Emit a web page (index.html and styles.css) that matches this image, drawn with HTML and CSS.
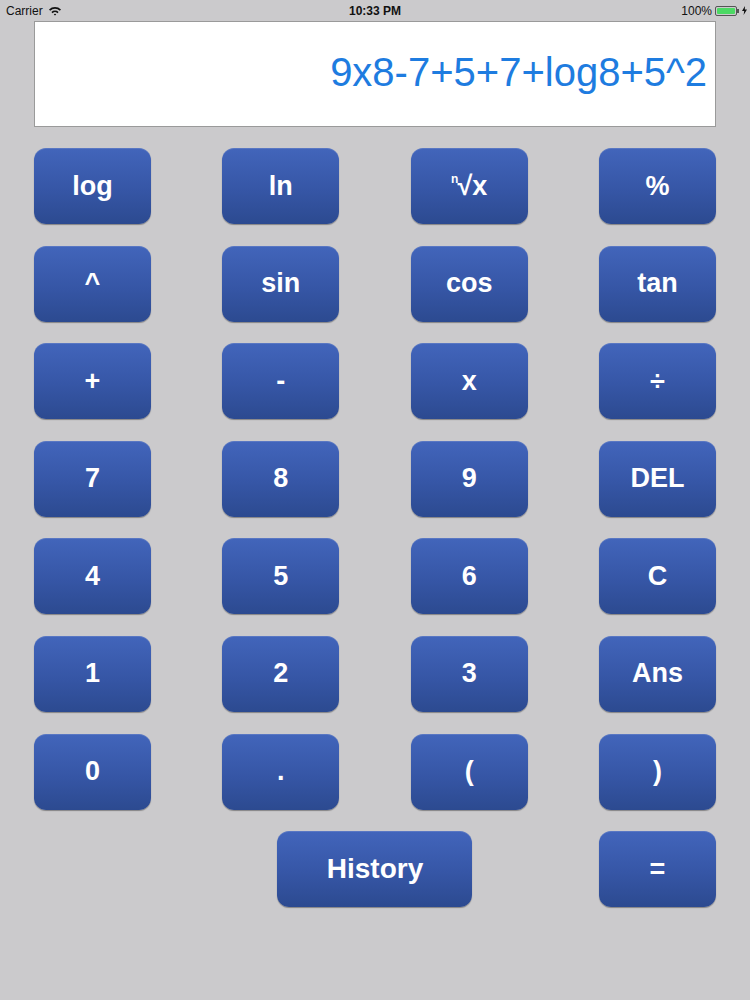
FILE: index.html
```html
<!DOCTYPE html>
<html>
<head>
<meta charset="utf-8">
<link rel="stylesheet" href="styles.css">
</head>
<body>
<div class="status">
  <div class="st-left">Carrier
    <svg class="wifi" width="14" height="10" viewBox="0 0 14 10"><path d="M1 3.6 A8.5 8.5 0 0 1 13 3.6 L11.8 4.8 A6.8 6.8 0 0 0 2.2 4.8 Z" fill="#111"/><path d="M3.4 6 A5.1 5.1 0 0 1 10.6 6 L9.4 7.2 A3.4 3.4 0 0 0 4.6 7.2 Z" fill="#111"/><path d="M5.8 8.4 A1.7 1.7 0 0 1 8.2 8.4 L7 9.6 Z" fill="#111"/></svg>
  </div>
  <div class="st-mid">10:33 PM</div>
  <div class="st-right">100%
    <span class="batt"><span class="batt-fill"></span></span><span class="batt-tip"></span>
    <svg class="bolt" width="5" height="9" viewBox="0 0 5 9"><path d="M3 0 L0 5 L2.2 5 L1.6 9 L5 3.6 L2.8 3.6 Z" fill="#111"/></svg>
  </div>
</div>
<div class="display"><span class="expr">9x8-7+5+7+log8+5^2</span></div>
<div class="pad">
  <button class="key">log</button>
  <button class="key">ln</button>
  <button class="key"><sup class="root-n">n</sup>√x</button>
  <button class="key">%</button>
  <button class="key">^</button>
  <button class="key">sin</button>
  <button class="key">cos</button>
  <button class="key">tan</button>
  <button class="key">+</button>
  <button class="key">-</button>
  <button class="key">x</button>
  <button class="key">÷</button>
  <button class="key">7</button>
  <button class="key">8</button>
  <button class="key">9</button>
  <button class="key">DEL</button>
  <button class="key">4</button>
  <button class="key">5</button>
  <button class="key">6</button>
  <button class="key">C</button>
  <button class="key">1</button>
  <button class="key">2</button>
  <button class="key">3</button>
  <button class="key">Ans</button>
  <button class="key">0</button>
  <button class="key">.</button>
  <button class="key">(</button>
  <button class="key">)</button>
  <button class="key history">History</button>
  <button class="key equals">=</button>
</div>
</body>
</html>
```
FILE: styles.css
```css
html, body {
  margin: 0;
  padding: 0;
}
body {
  width: 750px;
  height: 1000px;
  background: #cbcacc;
  font-family: "Liberation Sans", Arial, sans-serif;
  overflow: hidden;
}
.status {
  height: 21px;
  display: flex;
  align-items: center;
  justify-content: space-between;
  padding: 0 3px 0 6px;
  font-size: 12px;
  color: #111;
  position: relative;
}
.st-left {
  display: flex;
  align-items: center;
  gap: 5px;
}
.st-mid {
  position: absolute;
  left: 0;
  right: 0;
  text-align: center;
  font-weight: bold;
  pointer-events: none;
}
.st-right {
  display: flex;
  align-items: center;
}
.batt {
  margin-left: 3px;
  width: 22px;
  height: 10px;
  border: 1px solid #555;
  border-radius: 2px;
  padding: 1px;
  box-sizing: border-box;
  display: flex;
}
.batt-fill {
  flex: 1;
  background: #4cd964;
  border-radius: 1px;
}
.batt-tip {
  width: 2px;
  height: 4px;
  background: #555;
  margin-right: 3px;
}
.display {
  margin: 0 34px;
  height: 106px;
  box-sizing: border-box;
  background: #fff;
  border: 1px solid #9a9a9a;
  display: flex;
  align-items: center;
  justify-content: flex-end;
  padding: 0 8px 4px 0;
}
.expr {
  font-size: 40px;
  color: #1e7ce0;
}
.pad {
  margin: 21px 34px 0 34px;
  display: grid;
  grid-template-columns: repeat(4, 117px);
  grid-auto-rows: 76px;
  justify-content: space-between;
  row-gap: 21.6px;
}
.key {
  border: none;
  margin: 0;
  padding: 0;
  border-radius: 12px;
  background: linear-gradient(to bottom, #4265bb 0%, #3656a6 55%, #2c4a90 100%);
  box-shadow: 0 1px 1px rgba(0,0,0,0.35), inset 0 1px 0 rgba(255,255,255,0.12);
  color: #fff;
  font-family: "Liberation Sans", Arial, sans-serif;
  font-weight: bold;
  font-size: 27px;
  display: flex;
  align-items: center;
  justify-content: center;
}
.root-n {
  font-size: 12px;
  vertical-align: 0;
  position: relative;
  top: -7px;
  margin-right: -1px;
}
.history {
  grid-column: 2 / 4;
  width: 195px;
  justify-self: center;
  font-size: 28px;
}
.equals {
  grid-column: 4;
}
```
